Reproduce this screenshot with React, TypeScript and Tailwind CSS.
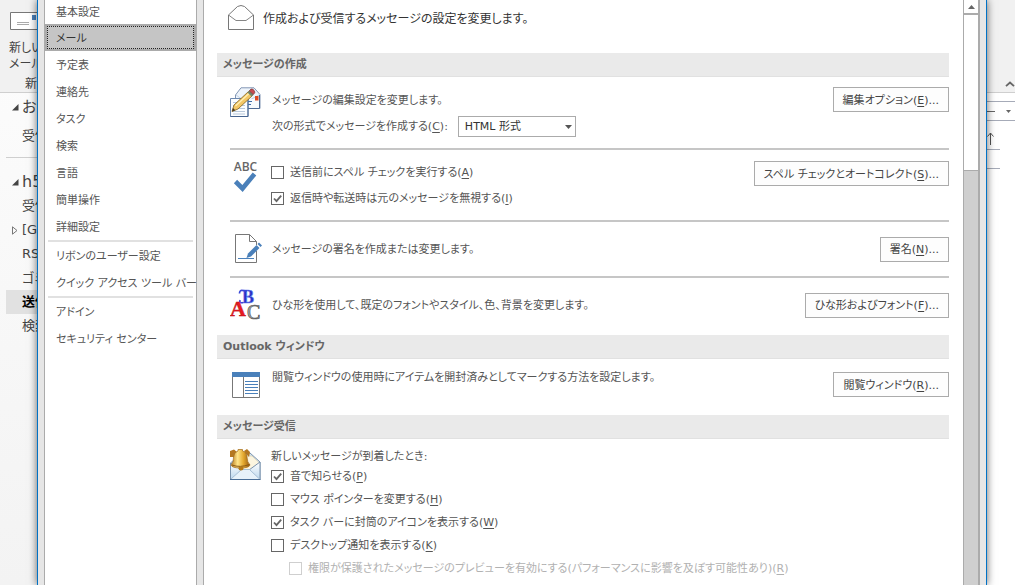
import { ReactNode, useId } from "react";
import clsx from "clsx";

interface NavEntry {
  label: string;
  endsGroup?: boolean;
}

const navItems: NavEntry[] = [
  { label: "基本設定" },
  { label: "メール" },
  { label: "予定表" },
  { label: "連絡先" },
  { label: "タスク" },
  { label: "検索" },
  { label: "言語" },
  { label: "簡単操作" },
  { label: "詳細設定", endsGroup: true },
  { label: "リボンのユーザー設定" },
  { label: "クイック アクセス ツール バー", endsGroup: true },
  { label: "アドイン" },
  { label: "セキュリティ センター" },
];

const arrivalOptions = [
  { label: "音で知らせる", accessKey: "P", checked: true },
  { label: "マウス ポインターを変更する", accessKey: "H", checked: false },
  { label: "タスク バーに封筒のアイコンを表示する", accessKey: "W", checked: true },
  { label: "デスクトップ通知を表示する", accessKey: "K", checked: false },
];

function AccessKey({ children }: { children: string }) {
  return (
    <>
      (<span className="underline underline-offset-2">{children}</span>)
    </>
  );
}

function DialogButton({ label, accessKey }: { label: string; accessKey: string }) {
  return (
    <button
      type="button"
      className="h-[25px] shrink-0 border border-[#ababab] bg-[#fdfdfd] px-[9px] pt-0.5 whitespace-nowrap text-[#444]"
    >
      {label}
      <AccessKey>{accessKey}</AccessKey>...
    </button>
  );
}

interface CheckOptionProps {
  label: string;
  accessKey: string;
  checked?: boolean;
  disabled?: boolean;
}

function CheckOption({ label, accessKey, checked = false, disabled = false }: CheckOptionProps) {
  const id = useId();
  return (
    <div className={clsx("flex items-start gap-1.5 whitespace-nowrap", disabled && "pl-[18px] text-[#b1b1b1]")}>
      <span className="mt-px grid h-[13px] w-[13px] shrink-0">
        <input
          id={id}
          type="checkbox"
          defaultChecked={checked}
          disabled={disabled}
          className="peer col-start-1 row-start-1 h-[13px] w-[13px] appearance-none border border-[#666] bg-white disabled:border-[#cfcfcf]"
        />
        <svg
          viewBox="0 0 13 13"
          className="pointer-events-none invisible col-start-1 row-start-1 h-[13px] w-[13px] peer-checked:visible"
        >
          <path d="M3 6.5 5.5 9.2 10.2 3.6" fill="none" stroke="#666" strokeWidth="1.8" />
        </svg>
      </span>
      <label htmlFor={id}>
        {label}
        <AccessKey>{accessKey}</AccessKey>
      </label>
    </div>
  );
}

function SectionTitle({ children }: { children: ReactNode }) {
  return (
    <h2 className="flex h-6 items-center border-b border-[#e1e1e1] bg-[#eaeaea] px-1.5 font-bold text-[#666]">
      {children}
    </h2>
  );
}

function Divider() {
  return <div className="ml-[13px] h-0.5 bg-[#c6c6c6]" />;
}

function OpenEnvelopeIcon() {
  return (
    <svg width="26" height="26" viewBox="0 0 26 26" fill="none" stroke="#777" className="shrink-0">
      <path d="M.5 10 9.5 1.5Q13 -.5 16.5 1.5L25.5 10V24.5H.5Z" />
      <path d="M.5 10 8 15.5H18L25.5 10" strokeWidth=".9" />
    </svg>
  );
}

function ComposeIcon() {
  return (
    <svg width="32" height="32" viewBox="0 0 32 32" className="shrink-0">
      <path d="M5.5 8 11 .8H24L30 7.5V21.5H5.5Z" fill="#eef4fb" stroke="#8296b4" />
      <path d="M6 8 16 15 30 7.5" fill="none" stroke="#c3d2e4" />
      <path d="M6 12H30V21.5H6Z" fill="#f8fbff" opacity=".8" />
      <path d="M29.5 8V21.5H18" fill="none" stroke="#4d6a94" />
      <rect x="25" y="9" width="3.5" height="4.5" fill="#e04a24" />
      <path d="M18 14.5H22M18 17.5H21" stroke="#3c6ca8" />
      <path d="M.5 11.5H18V29.5H.5Z" fill="#fbfdff" stroke="#6c88ae" />
      <path d="M18 12V29.5H.5" fill="none" stroke="#47648f" />
      <path d="M3 15.5H15M3 18.5H15M3 21.5H15M3 24.5H15M3 27H15" stroke="#b8c8da" />
      <path d="M2 24.5 4 18 18.5 4.5 22.5 8.5 8 22Z" fill="#f4c765" stroke="#81601c" strokeWidth=".8" />
      <path d="M5.5 19 19.8 5.8" stroke="#fff0b4" strokeWidth="1.3" />
      <path d="M2 24.5 3 21 5.3 23.2Z" fill="#443620" />
      <path d="M17.5 5.5 19.5 3.5 23.5 7.5 21.5 9.5Z" fill="#71866d" />
      <path d="M19.3 3.8 21 2Q23.5 1.5 24.5 4.2L24.8 5.8 23.3 7.5Z" fill="#c74a50" stroke="#7c3435" strokeWidth=".7" />
    </svg>
  );
}

function SpellingIcon() {
  return (
    <svg width="32" height="33" viewBox="0 0 32 33" className="shrink-0">
      <text x="15.5" y="10" textAnchor="middle" fontSize="12" fontWeight="600" fontFamily="Open Sans" fill="#666">
        ABC
      </text>
      <path d="M5.500 20.500 12.500 27.500 24.500 13" fill="none" stroke="#4a80ba" strokeWidth="4.6" />
    </svg>
  );
}

function SignatureIcon() {
  return (
    <svg width="32" height="32" viewBox="0 0 32 32" fill="none" className="shrink-0">
      <path d="M26.5 12V8.500L19.500 1.500H5.500V29.500H26.500V18" stroke="#777" />
      <path d="M19.5 1.500V8.500H26.500" stroke="#777" />
      <path d="M8 25.500H24" stroke="#4a80ba" />
      <path d="M16.500 25 18 20.500 26.500 12 29.500 15 21 23.500Z" fill="#4a80ba" />
      <path d="M27.500 11 29 9.500 32 12.500 30.500 14Z" fill="#4a80ba" />
    </svg>
  );
}

function StationeryIcon() {
  return (
    <svg width="32" height="32" viewBox="0 0 32 32" className="shrink-0" fontFamily="Liberation Serif" fontWeight="700">
      <text x="12" y="14" fontSize="18" fill="#2631c4" stroke="#6f83ee" strokeWidth=".6">
        B
      </text>
      <path d="M9.500 4.500Q9.500 1 12.500 1.500T17 2M13 13.500Q9 14.500 10 11" fill="none" stroke="#3948d8" strokeWidth="1.700" />
      <text x="0" y="27" fontSize="22" fill="#e81a22" stroke="#b50c12" strokeWidth=".4">
        A
      </text>
      <text x="17" y="29.500" fontSize="20" fontWeight="400" fill="#aaa" stroke="#555" strokeWidth=".7">
        C
      </text>
    </svg>
  );
}

function ReadingPaneIcon() {
  return (
    <svg width="32" height="27" viewBox="0 0 32 27" fill="none" className="shrink-0">
      <path d="M2.500 1V25.500H29.500V1M13.500 5V25.500" stroke="#777" />
      <path d="M2 0H30V5H2Z" fill="#4a80ba" />
      <path d="M15 9.500H28M15 12.500H28M15 15.500H28M15 18.500H28M15 21.500H28" stroke="#4a80ba" />
    </svg>
  );
}

function BellIcon() {
  return (
    <svg width="32" height="32" viewBox="0 1 32 32" className="shrink-0">
      <defs>
        <linearGradient id="brass">
          <stop offset="0" stopColor="#b77919" />
          <stop offset=".35" stopColor="#ffe58a" />
          <stop offset=".65" stopColor="#e4a92f" />
          <stop offset="1" stopColor="#94580f" />
        </linearGradient>
        <linearGradient id="paper" x2="0" y2="1">
          <stop offset="0" stopColor="#fff" />
          <stop offset="1" stopColor="#bcd8ee" />
        </linearGradient>
      </defs>
      <path d="M.5 15 12 5H20L30 14V31.500H.5Z" fill="#d3e4f3" stroke="#7b93ad" />
      <path d="M5 8H22L29.500 15 20 22H8Z" fill="#fcf5df" stroke="#d5c9a6" strokeWidth=".6" />
      <path d="M.5 15 12 22H19L30 14V31.500H.5Z" fill="url(#paper)" stroke="#7b93ad" />
      <path d="M1 31 11.500 21.500H19.500L29.500 31" fill="#e7f2fa" stroke="#a6bfd5" />
      <path d="M0 31.500H30.500" stroke="#4a6f98" />
      <path d="M0 9V3L4 1.500 7 4 6 9ZM14 3 17 1 20 4 19 9Z" fill="#b47720" />
      <path d="M1 17Q4 14 3.500 9 4 4 8 3V1.500H12.500V3Q17 4 17 9 17 14 20 17 19 20 10.500 20 2 20 1 17Z" fill="url(#brass)" stroke="#a06918" strokeWidth=".7" />
      <path d="M2 17Q10 20 19.500 16.500" fill="none" stroke="#8a5814" />
      <ellipse cx="11" cy="20.500" rx="2.500" ry="2" fill="#b57916" />
    </svg>
  );
}

interface FolderRowProps {
  children: ReactNode;
  marker?: "open" | "closed";
  selected?: boolean;
}

function FolderRow({ children, marker, selected = false }: FolderRowProps) {
  return (
    <li className={clsx("ml-1.5 flex h-6 items-center", selected && "bg-[#e1e1e1] font-bold text-black")}>
      <span className="w-4 shrink-0 pl-1.5">
        {marker === "open" && (
          <svg width="7" height="7" viewBox="0 0 7 7">
            <path d="M6.500 0V6.500H0Z" fill="#444" />
          </svg>
        )}
        {marker === "closed" && (
          <svg width="6" height="9" viewBox="0 0 6 9">
            <path d="M.5 .8 5 4.500.5 8.200Z" fill="none" stroke="#777" />
          </svg>
        )}
      </span>
      {children}
    </li>
  );
}

// Part of the main window that stays visible left of the dialog
function FolderStrip() {
  return (
    <aside className="flex w-[37px] shrink-0 flex-col overflow-hidden bg-gradient-to-b from-[#fdfdfd] to-[#f3f3f3] text-[13px] whitespace-nowrap text-[#444]">
      <div className="flex h-[93px] shrink-0 flex-col border-b border-[#cfcfcf] bg-[#f1f1f1] pt-3 pl-[9px] text-xs leading-4">
        <svg width="28" height="18" viewBox="0 0 28 18" className="mb-2.5 ml-px shrink-0">
          <path d="M.5 .5H40V17.500H.5Z" fill="#fff" stroke="#777" />
          <path d="M22 3H26V8H22Z" fill="#4a80ba" />
          <path d="M7 10.500H19M7 12.500H19" stroke="#aaa" />
        </svg>
        <span>新しい</span>
        <span>メール</span>
        <span className="pt-1 pl-4">新規</span>
      </div>
      <ul className="shrink-0 pt-0.5">
        <FolderRow marker="open">
          <span className="text-[15px]">お気</span>
        </FolderRow>
        <li className="h-[5px]" />
        <FolderRow>受信</FolderRow>
        <li className="mb-3 ml-1.5 h-2.5 border-b border-[#cfcfcf]" />
        <FolderRow marker="open">
          <span className="text-base">h5</span>
        </FolderRow>
        <FolderRow>受信</FolderRow>
        <FolderRow marker="closed">[G</FolderRow>
        <FolderRow>RS</FolderRow>
        <FolderRow>ゴミ</FolderRow>
        <FolderRow selected>送信</FolderRow>
        <FolderRow>検索</FolderRow>
      </ul>
    </aside>
  );
}

// Part of the main window that stays visible right of the dialog
function RibbonStrip() {
  return (
    <aside className="flex w-7 shrink-0 flex-col overflow-hidden bg-white">
      <div className="flex h-[93px] shrink-0 items-end justify-end border-b border-[#cfcfcf] bg-[#f1f1f1] pb-[5px]">
        <svg width="10" height="6" viewBox="0 0 10 6">
          <path d="M1 5.200 5 1.500 9 5.200" fill="none" stroke="#666" strokeWidth="1.800" />
        </svg>
      </div>
      <div className="mt-2 flex h-5 shrink-0 items-center justify-between border-y border-[#a6abb8] pr-1">
        <svg width="8" height="1" viewBox="0 0 8 1">
          <path d="M0 .5H8" stroke="#666" />
        </svg>
        <svg width="5" height="3" viewBox="0 0 5 3">
          <path d="M0 0H5L2.500 3Z" fill="#666" />
        </svg>
      </div>
      <div className="flex h-[29px] w-[13px] shrink-0 items-end border-b border-[#a6abb8] pb-1">
        <svg width="7" height="13" viewBox="0 0 7 13">
          <path d="M3.500 13V1M.5 4.500 3.500 1 6.500 4.500" fill="none" stroke="#555" />
        </svg>
      </div>
      <div className="h-[19px] w-[13px] shrink-0 border-b border-[#a6abb8]" />
    </aside>
  );
}

function CategoryNav() {
  return (
    <nav className="w-[153px] shrink-0 border-x border-[#ababab] bg-white">
      {navItems.map((item) => {
        const selected = item.label === "メール";
        return (
          <div key={item.label} className="group">
            <button
              type="button"
              className={clsx(
                "flex h-[27px] w-full p-0.5 whitespace-nowrap group-first:h-6",
                selected ? "bg-[#ababab] text-[#333]" : "text-[#555]",
              )}
            >
              <span
                className={clsx(
                  "flex h-full w-full items-center border px-2 pt-0.5",
                  selected ? "border-dotted border-[#222] bg-[#c5c5c5]" : "border-transparent",
                )}
              >
                {item.label}
              </span>
            </button>
            {item.endsGroup && <div className="mx-[3px] h-0.5 bg-[#e1e1e1]" />}
          </div>
        );
      })}
    </nav>
  );
}

function ScrollBar() {
  return (
    <div className="flex w-4 shrink-0 flex-col border-x border-x-[#ababab] bg-[#cfcfcf]">
      <button
        type="button"
        aria-label="上へスクロール"
        className="grid h-[15px] shrink-0 place-items-center border-b-2 border-[#ababab] bg-white"
      >
        <svg width="7" height="4" viewBox="0 0 7 4">
          <path d="M0 4 3.500 0 7 4Z" fill="#666" />
        </svg>
      </button>
      <div className="h-[156px] shrink-0 border-b border-[#ababab] bg-white" />
    </div>
  );
}

export default function App() {
  return (
    <div className="flex h-screen overflow-hidden bg-white font-['DejaVu_Sans','Noto_Sans_CJK_JP',sans-serif] text-[11px] leading-4 text-[#555] [font-feature-settings:'palt']">
      <FolderStrip />

      <div className="z-10 flex min-w-0 flex-1 gap-1.5 border-x border-[#0072c6] bg-[#e6e6e6] px-1.5 shadow-[0_0_8px_rgba(0,0,0,0.6)]">
        <CategoryNav />

        <div className="flex min-w-0 flex-1 border-x border-[#ababab] bg-white">
          <main className="min-w-0 flex-1 overflow-hidden pr-[14px] pl-[13px]">
            <header className="flex h-[53px] items-start gap-[9px] pt-[5px] pl-[11px]">
              <OpenEnvelopeIcon />
              <h1 className="pt-1.5 text-xs leading-4 text-[#333]">作成および受信するメッセージの設定を変更します。</h1>
            </header>

            <SectionTitle>メッセージの作成</SectionTitle>
            <div className="flex h-[71px] items-start gap-2.5 pt-2.5 pl-[13px]">
              <ComposeIcon />
              <div className="flex-1">
                <p className="flex h-[25px] items-center pt-0.5">メッセージの編集設定を変更します。</p>
                <div className="flex items-center gap-2.5 pt-1">
                  <label htmlFor="format">
                    次の形式でメッセージを作成する<AccessKey>C</AccessKey>:
                  </label>
                  <div className="grid h-[21px] w-[118px] items-center">
                    <select
                      id="format"
                      className="col-start-1 row-start-1 h-[21px] w-full appearance-none border border-[#ababab] bg-white pl-1.5 text-[#333]"
                    >
                      <option>HTML 形式</option>
                    </select>
                    <svg
                      width="7"
                      height="4"
                      viewBox="0 0 7 4"
                      className="pointer-events-none col-start-1 row-start-1 mr-1 justify-self-end"
                    >
                      <path d="M0 0H7L3.500 4Z" fill="#555" />
                    </svg>
                  </div>
                </div>
              </div>
              <DialogButton label="編集オプション" accessKey="E" />
            </div>
            <Divider />
            <div className="flex h-[70px] items-start gap-[9px] pt-[11px] pl-[13px]">
              <SpellingIcon />
              <div className="flex flex-1 flex-col gap-2.5 pt-1">
                <CheckOption label="送信前にスペル チェックを実行する" accessKey="A" />
                <CheckOption label="返信時や転送時は元のメッセージを無視する" accessKey="I" checked />
              </div>
              <DialogButton label="スペル チェックとオートコレクト" accessKey="S" />
            </div>
            <Divider />
            <div className="flex h-[54px] items-center gap-2.5 pl-[13px]">
              <SignatureIcon />
              <p className="flex-1 pt-0.5">メッセージの署名を作成または変更します。</p>
              <DialogButton label="署名" accessKey="N" />
            </div>
            <Divider />
            <div className="mb-[3px] flex h-[54px] items-center gap-2.5 pl-[13px]">
              <StationeryIcon />
              <p className="flex-1 pt-0.5">ひな形を使用して、既定のフォントやスタイル、色、背景を変更します。</p>
              <DialogButton label="ひな形およびフォント" accessKey="F" />
            </div>

            <SectionTitle>Outlook ウィンドウ</SectionTitle>
            <div className="flex h-14 items-start gap-2.5 pt-[13px] pl-[13px]">
              <ReadingPaneIcon />
              <p className="-mt-0.5 flex-1">
                閲覧ウィンドウの使用時にアイテムを開封済みとしてマークする方法を設定します。
              </p>
              <DialogButton label="閲覧ウィンドウ" accessKey="R" />
            </div>

            <SectionTitle>メッセージ受信</SectionTitle>
            <div className="flex items-start gap-[9px] pt-2.5 pl-[13px]">
              <BellIcon />
              <div className="flex flex-col gap-[7px]">
                <p className="-mb-[3px]">新しいメッセージが到着したとき:</p>
                {arrivalOptions.map((option) => (
                  <CheckOption key={option.accessKey} {...option} />
                ))}
                <CheckOption
                  label="権限が保護されたメッセージのプレビューを有効にする(パフォーマンスに影響を及ぼす可能性あり)"
                  accessKey="R"
                  disabled
                />
              </div>
            </div>
          </main>
          <ScrollBar />
        </div>
      </div>

      <RibbonStrip />
    </div>
  );
}
